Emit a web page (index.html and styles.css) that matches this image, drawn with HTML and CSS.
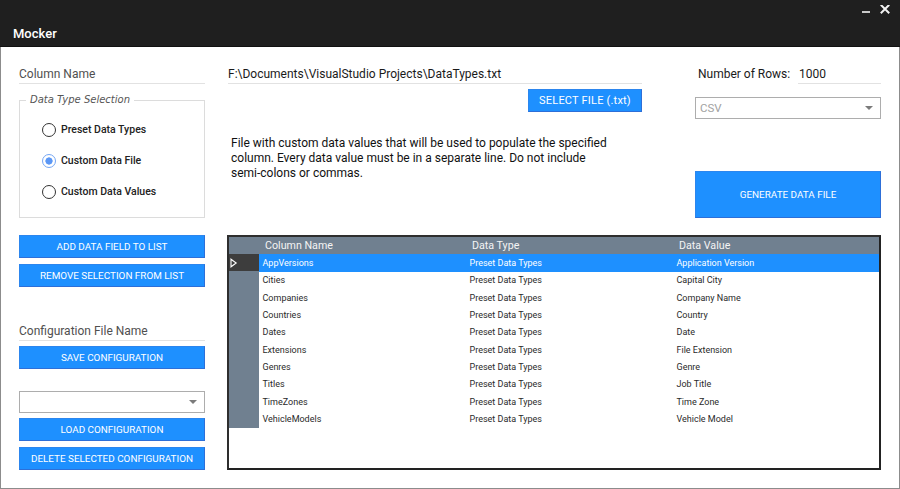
FILE: index.html
```html
<!DOCTYPE html>
<html lang="en">
<head>
<meta charset="utf-8">
<title>Mocker</title>
<link rel="stylesheet" href="styles.css">
</head>
<body>
<div class="app">
  <header class="titlebar">
    <div class="title">Mocker</div>
    <svg class="winctl" width="28" height="10" viewBox="0 0 28 10" aria-hidden="true">
      <rect x="0" y="6" width="8" height="2" fill="#c8c8c8"/>
      <path d="M19.5 0.5 L26.5 7.5 M26.5 0.5 L19.5 7.5" stroke="#f2f2f2" stroke-width="2" stroke-linecap="square"/>
    </svg>
  </header>

  <main class="main">
    <aside class="sidebar">
      <div class="field label">Column Name</div>

      <fieldset class="group">
        <legend class="legend">Data Type Selection</legend>
        <div class="radio"><span class="dot"></span>Preset Data Types</div>
        <div class="radio"><span class="dot checked"></span>Custom Data File</div>
        <div class="radio"><span class="dot"></span>Custom Data Values</div>
      </fieldset>

      <button class="btn btn-add">ADD DATA FIELD TO LIST</button>
      <button class="btn btn-next">REMOVE SELECTION FROM LIST</button>

      <div class="field label config-name">Configuration File Name</div>
      <button class="btn btn-save">SAVE CONFIGURATION</button>

      <div class="combo combo-config"><span class="combo-text"></span><span class="caret"></span></div>
      <button class="btn btn-save">LOAD CONFIGURATION</button>
      <button class="btn btn-next">DELETE SELECTED CONFIGURATION</button>
    </aside>

    <section class="workspace">
      <div class="top">
        <div class="filepane">
          <div class="field path">F:\Documents\VisualStudio Projects\DataTypes.txt</div>
          <button class="btn btn-select">SELECT FILE (.txt)</button>
          <p class="desc">File with custom data values that will be used to populate the specified column. Every data value must be in a separate line. Do not include semi-colons or commas.</p>
        </div>
        <div class="rightpane">
          <div class="rows">
            <span class="rows-label">Number of Rows:</span>
            <span class="field rows-value">1000</span>
          </div>
          <div class="combo combo-format"><span class="combo-text">CSV</span><span class="caret"></span></div>
          <button class="btn btn-generate">GENERATE DATA FILE</button>
        </div>
      </div>

      <div class="datagrid">
        <div class="grow ghead">
          <span class="rh"></span>
          <span class="hc">Column Name</span>
          <span class="hc">Data Type</span>
          <span class="hc">Data Value</span>
        </div>
        <div class="grow selected">
          <span class="rh"><svg width="8" height="10" viewBox="0 0 8 10" aria-hidden="true"><path d="M1 1.2 L6.2 5 L1 8.8 Z" fill="none" stroke="#fff" stroke-width="1.1"/></svg></span>
          <span class="c">AppVersions</span><span class="c">Preset Data Types</span><span class="c">Application Version</span>
        </div>
        <div class="grow"><span class="rh"></span><span class="c">Cities</span><span class="c">Preset Data Types</span><span class="c">Capital City</span></div>
        <div class="grow"><span class="rh"></span><span class="c">Companies</span><span class="c">Preset Data Types</span><span class="c">Company Name</span></div>
        <div class="grow"><span class="rh"></span><span class="c">Countries</span><span class="c">Preset Data Types</span><span class="c">Country</span></div>
        <div class="grow"><span class="rh"></span><span class="c">Dates</span><span class="c">Preset Data Types</span><span class="c">Date</span></div>
        <div class="grow"><span class="rh"></span><span class="c">Extensions</span><span class="c">Preset Data Types</span><span class="c">File Extension</span></div>
        <div class="grow"><span class="rh"></span><span class="c">Genres</span><span class="c">Preset Data Types</span><span class="c">Genre</span></div>
        <div class="grow"><span class="rh"></span><span class="c">Titles</span><span class="c">Preset Data Types</span><span class="c">Job Title</span></div>
        <div class="grow"><span class="rh"></span><span class="c">TimeZones</span><span class="c">Preset Data Types</span><span class="c">Time Zone</span></div>
        <div class="grow"><span class="rh"></span><span class="c">VehicleModels</span><span class="c">Preset Data Types</span><span class="c">Vehicle Model</span></div>
      </div>
    </section>
  </main>
</div>
</body>
</html>
```

FILE: styles.css
```css
* { box-sizing: border-box; }

html, body {
  margin: 0;
  padding: 0;
  background: #ffffff;
}

body {
  font-family: Roboto, "Liberation Sans", sans-serif;
  color: #222;
}

.app {
  width: 900px;
  height: 489px;
  display: flex;
  flex-direction: column;
  overflow: hidden;
}

/* ---------- title bar ---------- */
.titlebar {
  height: 47px;
  flex: 0 0 47px;
  background: #1f1f1f;
  border-bottom: 1px solid #111;
  display: flex;
  padding: 0 10px 0 13px;
}

.title {
  margin-top: 26px;
  font-size: 13px;
  line-height: 16px;
  font-weight: 500;
  color: #ffffff;
}

.winctl {
  margin-left: auto;
  margin-top: 5px;
}

/* ---------- main ---------- */
.main {
  flex: 1;
  display: flex;
  gap: 22px;
  padding: 18px 0 0 18px;
  border: 1px solid #8c8c8c;
  border-top: none;
}

.sidebar {
  width: 186px;
  flex: 0 0 186px;
  display: flex;
  flex-direction: column;
}

.field {
  height: 19px;
  line-height: 18px;
  font-size: 12px;
  border-bottom: 1px solid #e2e2e2;
  white-space: nowrap;
}

.label { color: #505050; }

.group {
  margin: 9px 0 0 0;
  padding: 7px 0 10px 6px;
  border: 1px solid #dcdcdc;
  min-width: 0;
}

.legend {
  padding: 0 4px;
  font-family: "DejaVu Sans", Verdana, sans-serif;
  font-style: italic;
  font-size: 10px;
  line-height: 14px;
  color: #555;
}

.radio {
  height: 31px;
  display: flex;
  align-items: center;
  gap: 5px;
  margin-left: 16px;
  font-size: 10.5px;
  font-weight: 500;
  color: #222;
}

.dot {
  width: 14px;
  height: 14px;
  border-radius: 50%;
  border: 1.5px solid #333;
  background: #fff;
  flex: 0 0 14px;
}

.dot.checked {
  border-color: #74a6f4;
  background: radial-gradient(circle, #5b97f5 0, #5b97f5 3.3px, #ffffff 3.9px);
}

/* ---------- buttons ---------- */
.btn {
  display: flex;
  align-items: center;
  justify-content: center;
  height: 23px;
  padding: 0;
  margin: 0;
  background: #1e90ff;
  border: 1px solid #2c86ee;
  border-bottom-color: #2d6fd8;
  border-right-color: #2d6fd8;
  color: #fff;
  font-family: Roboto, "Liberation Sans", sans-serif;
  font-size: 9.9px;
  white-space: nowrap;
  width: 100%;
}

.btn-add { margin-top: 17px; }
.btn-next { margin-top: 6px; }
.btn-save { margin-top: 5px; }

.config-name { margin-top: 35px; }

/* ---------- combo ---------- */
.combo {
  height: 22px;
  border: 1px solid #adadad;
  background: #fff;
  display: flex;
  align-items: center;
  justify-content: space-between;
  padding: 0 7px 0 4px;
  font-size: 11.5px;
  color: #a2a2a2;
}

.caret {
  width: 0;
  height: 0;
  border-left: 4px solid transparent;
  border-right: 4px solid transparent;
  border-top: 4px solid #7b7b7b;
}

.combo-config { margin-top: 22px; }
.combo-format { margin-top: 13px; }

/* ---------- workspace ---------- */
.workspace {
  width: 654px;
  flex: 0 0 654px;
  display: flex;
  flex-direction: column;
}

.top {
  display: flex;
  justify-content: space-between;
}

.filepane {
  width: 415px;
  padding-left: 1px;
  display: flex;
  flex-direction: column;
}

.path { color: #1a1a1a; }

.btn-select {
  align-self: flex-end;
  width: 114px;
  margin-top: 5px;
  font-size: 11px;
  letter-spacing: 0.2px;
}

.desc {
  margin: 24px 0 0 0;
  padding-left: 3px;
  width: 386px;
  font-size: 12px;
  line-height: 15px;
  color: #111;
}

.rightpane {
  width: 186px;
  display: flex;
  flex-direction: column;
}

.rows {
  display: flex;
  align-items: flex-start;
}

.rows-label {
  padding-left: 3px;
  font-size: 12px;
  line-height: 18px;
  color: #1a1a1a;
}

.rows-value {
  margin-left: auto;
  width: 83px;
  padding-left: 1px;
  color: #1a1a1a;
}

.btn-generate {
  height: 47px;
  margin-top: 52px;
}

/* ---------- data grid ---------- */
.datagrid {
  margin-top: 17px;
  height: 235px;
  border: 2px solid #2e2e2e;
  border-right-color: #222;
  border-bottom-color: #222;
  background: #fff;
}

.grow {
  display: grid;
  grid-template-columns: 30px 207px 207px 1fr;
  height: 17.33px;
  line-height: 17.33px;
  font-size: 9px;
  color: #2a2a2a;
}

.ghead {
  height: 17px;
  line-height: 17px;
  background: #708090;
  color: #f4f4f4;
  font-size: 10.7px;
}

.rh {
  background: #708090;
  display: flex;
  align-items: center;
  padding-left: 1px;
}

.hc { padding-left: 6px; white-space: nowrap; }
.c { padding-left: 3.5px; padding-top: 1px; white-space: nowrap; }

.selected .rh { background: #3d3d3d; }
.selected .c { background: #1e90ff; color: #fff; }
```
